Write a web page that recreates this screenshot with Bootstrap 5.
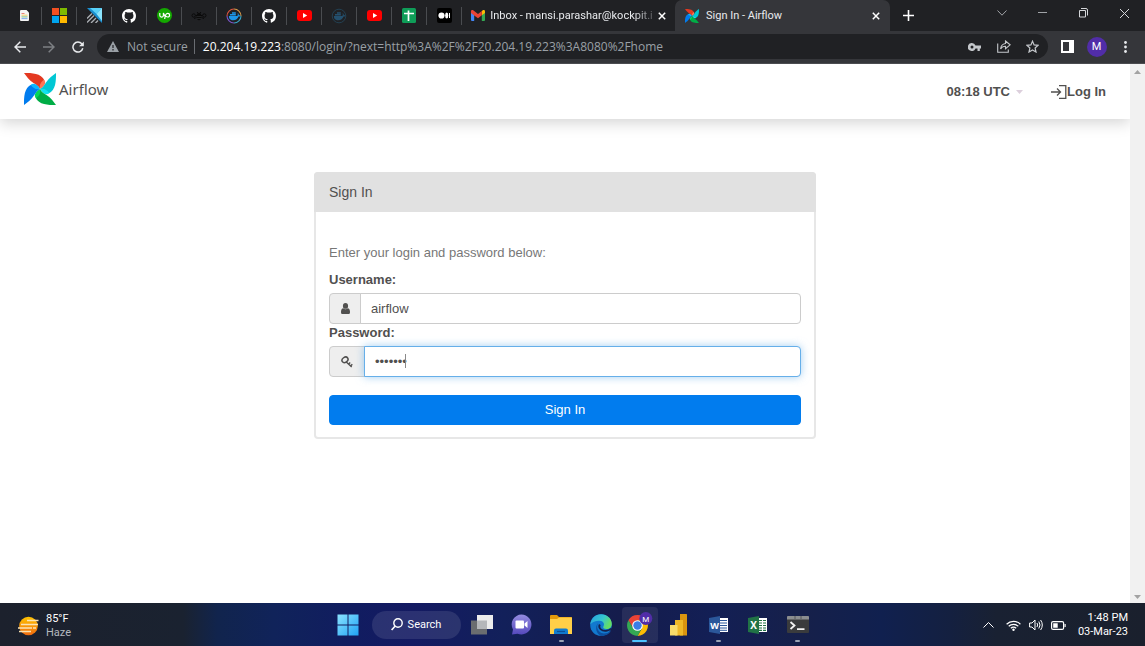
<!DOCTYPE html>
<html lang="en">
<head>
<meta charset="utf-8">
<meta name="viewport" content="width=device-width, initial-scale=1">
<title>Sign In - Airflow</title>
<link href="https://cdn.jsdelivr.net/npm/bootstrap@5.3.0/dist/css/bootstrap.min.css" rel="stylesheet">
<style>
  body { font-family: "Liberation Sans", Arial, sans-serif; font-size: 13px; line-height: 20px; color: #51504f; background: #fff; }
  svg { display: block; flex: none; }
  button { font-family: inherit; }
  .plain { background: none; border: 0; padding: 0; color: inherit; display: flex; align-items: center; justify-content: center; flex: none; }

  /* browser chrome */
  .ui-font { font-family: "Open Sans", "Noto Sans", sans-serif; }
  .tabstrip { height: 31px; background: #202124; color: #e8eaed; padding-left: 7px; font-family: Roboto, sans-serif; font-size: 11px; }
  .pinned { width: 35px; height: 18px; border-right: 1px solid #4a4c50; }
  .wide-tab { width: 213px; padding: 0 10px; gap: 5px; }
  .wide-tab .title-text { flex: 1; white-space: nowrap; text-align: left; }
  .fade-end { -webkit-mask-image: linear-gradient(90deg, #000 88%, rgba(0,0,0,.25)); mask-image: linear-gradient(90deg, #000 88%, rgba(0,0,0,.25)); }
  .current-tab { background: #35363a; border-radius: 7px 7px 0 0; width: 215px; gap: 7px; }
  .new-tab { width: 37px; }
  .win-btn { width: 41px; height: 26px; }
  .toolbar-row { height: 33px; background: #35363a; color: #e8eaed; padding: 0 5px 1px 5px; border-bottom: 1px solid #4b4c50; }
  .tool { width: 29px; height: 25px; }
  .omnibox { height: 25px; background: #202124; border-radius: 13px; margin: 0 5px; padding: 0 1px 0 10px; font-size: 12px; color: #9aa0a6; }
  .omnibox .sep { width: 1px; height: 15px; background: #6a6d72; margin: 0 8px 0 6px; }
  .omnibox .host { color: #fff; }
  .avatar { width: 20px; height: 20px; border-radius: 50%; background: #512da8; color: #fff; font-size: 11px; line-height: 20px; text-align: center; font-family: Roboto, sans-serif; }

  /* page */
  .site-nav { height: 55px; background: #fff; box-shadow: 0 4px 14px rgba(0,0,0,.17); padding: 0 24px; }
  .brand-link { gap: 3px; margin-bottom: 6px; }
  .brand-text { font-family: "Noto Sans", sans-serif; font-size: 15px; color: #51504f; }
  .site-nav a { color: #51504f; text-decoration: none; }
  .site-nav .item { font-weight: 700; font-size: 13px; gap: 6px; }
  .site-nav .login-link { gap: 0; }
  .login-card { width: 502px; max-width: 100%; margin: 53px auto 0; border: 2px solid #e7e7e7; border-radius: 4px; }
  .login-head { background: #e1e1e1; margin: -2px -2px 0; height: 40px; line-height: 40px; padding-left: 15px; font-size: 14px; border-radius: 4px 4px 0 0; }
  .login-body { padding: 31px 13px 12px; }
  .hint { color: #777; margin-bottom: 8px; }
  .login-body label { display: block; font-weight: 700; line-height: 18px; margin-bottom: 4px; }
  .login-body .input-group-text { width: 32px; height: 31px; padding: 0; justify-content: center; background: #eee; border-color: #ccc; color: #51504f; border-radius: 4px; }
  .login-body .input-group-text.key { width: 36px; }
  .login-body .form-control { height: 31px; padding: 0 10px; font-size: 13px; color: #51504f; border-color: #ccc; border-radius: 4px; }
  .login-body .form-control.active-field { border-color: #66afe9; box-shadow: 0 0 8px rgba(102,175,233,.6); }
  .caret-bar { left: 77px; top: 8px; width: 1px; height: 14px; background: #8a8a8a; z-index: 6; }
  .btn-signin { height: 30px; margin-top: 18px; padding: 0; font-size: 13px; color: #fff; background: #017cee; border: 1px solid #017cee; border-radius: 4px; }
  .btn-signin:hover { background: #0170d6; color: #fff; }
  .scroll-track { width: 15px; background: #f1f1f1; padding: 6px 0 4px; }

  /* taskbar */
  .taskbar { height: 43px; padding-left: 5px; color: #fff; font-family: Roboto, sans-serif; font-size: 11px; line-height: 14px;
    background: linear-gradient(90deg, #1c212d 0%, #1a2230 16%, #11244d 19%, #10235a 24%, #111c60 31%, #141a62 36%, #12205a 44%, #151c4c 54%, #131f55 62%, #16204a 70%, #10204f 77%, #142040 83%, #192132 87%, #1a202d 100%); }
  .side { flex: 1 1 0; min-width: 0; }
  .weather { padding: 2px 0 0 13px; gap: 6px; }
  .weather .dim { color: #b4b8bf; }
  .tray { padding: 1px 17px 0 0; gap: 8px; }
  .launchers { display: grid; grid-template-columns: repeat(9, 1fr); width: 355px; height: 43px; }
  .launch { position: relative; height: 43px; }
  .launch.running::after { content: ""; position: absolute; bottom: 4px; width: 5px; height: 2px; border-radius: 1px; background: #9ba3b5; }
  .launch.front::before { content: ""; position: absolute; inset: 4px 2px 3px; border-radius: 4px; background: rgba(255,255,255,.08); }
  .launch.front::after { width: 15px; background: #4cc2ff; }
  .launch svg { position: relative; }
  .search-pill { width: 89px; height: 28px; border-radius: 14px; background: rgba(255,255,255,.1); margin: 0 2px 0 5px; gap: 5px; font-size: 11px; }
</style>
</head>
<body class="d-flex flex-column vh-100 overflow-hidden">

<svg width="0" height="0" class="position-absolute" aria-hidden="true">
  <defs>
    <path id="blade" d="M0 0C8 0 17 0 20.500 7.500C18 9 16 12 16 16C14.500 13 12.500 12 9.500 10C5 7 2.500 3.500 0 0Z"/>
    <path id="fold" d="M16 16C15 12 17 9 20 6.800C22.300 9 21.500 13 16 16Z"/>
    <symbol id="pinwheel" viewBox="0 0 32 32">
      <g><use href="#blade" fill="#e43921"/><use href="#fold" fill="#ff7557"/></g>
      <g transform="rotate(90 16 16)"><use href="#blade" fill="#00c7d4"/><use href="#fold" fill="#11e1ee"/></g>
      <g transform="rotate(180 16 16)"><use href="#blade" fill="#00ad46"/><use href="#fold" fill="#04d659"/></g>
      <g transform="rotate(270 16 16)"><use href="#blade" fill="#017cee"/><use href="#fold" fill="#0cb6ff"/></g>
    </symbol>
    <symbol id="github" viewBox="0 0 16 16"><path fill="#fff" d="M8 0C3.580 0 0 3.580 0 8c0 3.540 2.290 6.530 5.470 7.590.4.070.55-.17.55-.38 0-.19-.01-.82-.01-1.490-2.010.37-2.530-.49-2.690-.94-.09-.23-.48-.94-.82-1.130-.28-.15-.68-.52-.01-.53.63-.01 1.080.58 1.230.82.72 1.210 1.870.87 2.330.66.070-.52.28-.87.51-1.070-1.780-.2-3.640-.89-3.640-3.950 0-.87.31-1.590.82-2.150-.08-.2-.36-1.020.08-2.120 0 0 .67-.21 2.200.82a7.600 7.600 0 0 1 4 0c1.530-1.040 2.200-.82 2.200-.82.44 1.100.16 1.920.08 2.120.51.56.82 1.270.82 2.150 0 3.070-1.870 3.750-3.650 3.950.29.25.54.73.54 1.480 0 1.070-.01 1.930-.01 2.200 0 .21.15.46.55.38A8 8 0 0 0 16 8c0-4.420-3.580-8-8-8z"/></symbol>
    <symbol id="youtube" viewBox="0 0 15 11"><rect width="15" height="11" rx="3" fill="#f00"/><path d="M6 3l4.200 2.500L6 8z" fill="#fff"/></symbol>
    <symbol id="whale" viewBox="0 0 16 16"><path d="M3 8h8c1 0 1-2 .6-3 1 .5 1.200 1.500 1.200 2.200.7-.1 1.300 0 1.700.3-.4.900-1.200 1.100-2 1.100C11.700 11 10 12.200 7.200 12.200 4.500 12.200 2.600 10.800 3 8zM4 6h5.800v1.500H4zM6 4.300h3.800v1.400H6z"/></symbol>
    <symbol id="cross" viewBox="0 0 8 8"><path d="M.8.800l6.400 6.400M7.200.800L.8 7.200" stroke="#fff" stroke-width="1.500"/></symbol>
  </defs>
</svg>

<header class="ui-font flex-shrink-0">
  <div class="tabstrip d-flex align-items-center">
    <button class="plain pinned" aria-label="Document"><svg width="9" height="11" viewBox="0 0 9 11"><path d="M1 0h5.500L9 2.500V10q0 1-1 1H1q-1 0-1-1V1q0-1 1-1z" fill="#f4f4f4"/><path d="M1.500 3.500h3" stroke="#ea8379"/><path d="M1.500 5.200h6" stroke="#f5cf66"/><path d="M1.500 6.900h6" stroke="#79c08c"/><path d="M1.500 8.600h6" stroke="#83adf0"/></svg></button>
    <button class="plain pinned" aria-label="Microsoft"><svg width="15" height="15" viewBox="0 0 15 15"><path d="M0 0h7v7H0z" fill="#f25022"/><path d="M8 0h7v7H8z" fill="#7fba00"/><path d="M0 8h7v7H0z" fill="#00a4ef"/><path d="M8 8h7v7H8z" fill="#ffb900"/></svg></button>
    <button class="plain pinned" aria-label="Project board"><svg width="15" height="15" viewBox="0 0 15 15"><path d="M0 0h15v15z" fill="#1b8fd0"/><path d="M3 0h12L9.500 6z" fill="#58d0f7"/><path d="M15 0v13L9.500 6z" fill="#8be4fb"/><path d="M0 10.500l5-5M0 14.500l7-7M4 15l5-5M8.500 15l2.500-2.500" stroke="#a9adb2" stroke-width="1.400"/></svg></button>
    <button class="plain pinned" aria-label="GitHub"><svg width="14" height="14"><use href="#github"/></svg></button>
    <button class="plain pinned" aria-label="Upwork"><svg width="15" height="15" viewBox="0 0 15 15"><circle cx="7.500" cy="7.500" r="7.500" fill="#14a800"/><path d="M2.800 5v2.300a1.800 1.800 0 0 0 3.600 0V5c.7 2 1.700 3.300 2.200 4M7.700 11c.4-3.500 1-5.700 2.900-5.700 2.600 0 2.600 3.700 0 3.700-1.300 0-2.100-1-2.700-2" fill="none" stroke="#fff" stroke-width="1.200"/></svg></button>
    <button class="plain pinned" aria-label="Hive"><svg width="16" height="10" viewBox="0 0 16 10"><g fill="none" stroke="#0a0a0b"><circle cx="2.700" cy="4.500" r="1.700"/><circle cx="13.300" cy="4.500" r="1.700"/><path d="M4.500 4.500h7M6 1l1.300 1.500M10 1L8.700 2.500M3 7.500l2.500-1M13 7.500l-2.500-1"/></g><ellipse cx="8" cy="5.500" rx="2.300" ry="3.700" fill="#0b0b0b"/><path d="M6 5.500h4M6 7.500h4" stroke="#2b2c2f" stroke-width=".7"/></svg></button>
    <button class="plain pinned" aria-label="Docker"><svg width="16" height="16" viewBox="0 0 16 16"><g fill="none" stroke-width="1.100"><path d="M1 8a7 7 0 0 1 7-7" stroke="#e0563f"/><path d="M8 1a7 7 0 0 1 7 7" stroke="#d99a4a"/><path d="M15 8a7 7 0 0 1-7 7" stroke="#39a7c9"/><path d="M8 15a7 7 0 0 1-7-7" stroke="#7a55c7"/></g><use href="#whale" fill="#1d96e8"/></svg></button>
    <button class="plain pinned" aria-label="GitHub repository"><svg width="14" height="14"><use href="#github"/></svg></button>
    <button class="plain pinned" aria-label="YouTube"><svg width="15" height="11"><use href="#youtube"/></svg></button>
    <button class="plain pinned" aria-label="Docker docs"><svg width="16" height="16" viewBox="0 0 16 16"><circle cx="8" cy="8" r="6.800" fill="none" stroke="#234052"/><use href="#whale" fill="#24506e"/></svg></button>
    <button class="plain pinned" aria-label="YouTube video"><svg width="15" height="11"><use href="#youtube"/></svg></button>
    <button class="plain pinned" aria-label="Spreadsheet"><svg width="14" height="15" viewBox="0 0 14 15"><rect width="14" height="15" rx="1.500" fill="#0f9d58"/><path d="M6.500 2.500v10.500M2 5.500h10" stroke="#fff" stroke-width="1.700"/></svg></button>
    <button class="plain pinned" aria-label="Medium"><svg width="15" height="15" viewBox="0 0 15 15"><rect width="15" height="15" rx="2" fill="#000"/><circle cx="4.500" cy="7.500" r="3.100" fill="#fff"/><ellipse cx="9.700" cy="7.500" rx="1.600" ry="2.900" fill="#fff"/><path d="M12.500 5v5" stroke="#fff" stroke-width="1"/></svg></button>
    <button class="plain wide-tab">
      <svg width="14" height="11" viewBox="0 0 14 11"><path d="M0 2v8q0 1 1 1h2.200V4.500z" fill="#4285f4"/><path d="M14 2v8q0 1-1 1h-2.200V4.500z" fill="#34a853"/><path d="M10.800 1v4.300L14 3V1.500C14 0 12.500-.3 11.500.5z" fill="#fbbc04"/><path d="M0 1.500v1.600l3.200 2.300L7 8.200l3.800-2.900V1L7 3.900 2.500.5C1.500-.3 0 0 0 1.500z" fill="#ea4335"/></svg>
      <span class="title-text fade-end">Inbox - mansi.parashar@kockpit.i</span>
      <svg width="8" height="8"><use href="#cross"/></svg>
    </button>
    <button class="plain wide-tab current-tab align-self-stretch">
      <svg width="14" height="14"><use href="#pinwheel"/></svg>
      <span class="title-text">Sign In - Airflow</span>
      <svg width="8" height="8"><use href="#cross"/></svg>
    </button>
    <button class="plain new-tab" aria-label="New tab"><svg width="11" height="11" viewBox="0 0 11 11"><path d="M5.500 0v11M0 5.500h11" stroke="#fff" stroke-width="1.600"/></svg></button>
    <div class="d-flex ms-auto align-self-start">
      <button class="plain win-btn" aria-label="Search tabs"><svg width="10" height="6" viewBox="0 0 10 6"><path d="M.5.500L5 5.200 9.500.500" fill="none" stroke="#a0a3a7"/></svg></button>
      <button class="plain win-btn" aria-label="Minimize"><svg width="9" height="2"><path d="M0 .5h9" stroke="#a0a3a7"/></svg></button>
      <button class="plain win-btn" aria-label="Restore"><svg width="9" height="10" viewBox="0 0 9 10"><path d="M.5 2.500h6v6.500h-6zM2 .5h5q1.500 0 1.500 1.500v5.500" fill="none" stroke="#d5d7da"/></svg></button>
      <button class="plain win-btn" aria-label="Close"><svg width="9" height="9" viewBox="0 0 9 9"><path d="M0 0l9 9M9 0L0 9" stroke="#d5d7da"/></svg></button>
    </div>
  </div>
  <div class="toolbar-row d-flex align-items-center">
    <button class="plain tool" aria-label="Back"><svg width="12" height="12" viewBox="0 0 12 12"><path d="M12 6H1.200M6.300.8L1 6l5.300 5.200" fill="none" stroke="#e8eaed" stroke-width="1.500"/></svg></button>
    <button class="plain tool" aria-label="Forward"><svg width="12" height="12" viewBox="0 0 12 12"><path d="M0 6h10.800M5.700.8L11 6l-5.300 5.200" fill="none" stroke="#7d8084" stroke-width="1.500"/></svg></button>
    <button class="plain tool" aria-label="Reload"><svg width="12" height="12" viewBox="0 0 12 12"><path d="M10.800 7.300A5 5 0 1 1 9.800 2.800L11 4" fill="none" stroke="#e8eaed" stroke-width="1.500"/><path d="M11.800.4v4.800H7z" fill="#e8eaed"/></svg></button>
    <div class="omnibox flex-grow-1 d-flex align-items-center">
      <svg width="12" height="11" viewBox="0 0 12 11"><path d="M6 0l6 11H0z" fill="#9aa0a6"/><path d="M6 4v3M6 8v1.500" stroke="#202124" stroke-width="1.200"/></svg>
      <span class="ms-2 text-nowrap">Not secure</span>
      <span class="sep"></span>
      <span class="flex-grow-1 text-nowrap"><span class="host">20.204.19.223</span>:8080/login/?next=http%3A%2F%2F20.204.19.223%3A8080%2Fhome</span>
      <button class="plain tool" aria-label="Saved passwords"><svg width="13" height="8" viewBox="0 0 13 8"><path fill-rule="evenodd" fill="#c4c7cb" d="M4 0a4 4 0 1 0 3.500 5.500H9.500V8h2.300V5.500H13v-3H7.500A4 4 0 0 0 4 0zm0 2.500a1.500 1.500 0 1 1 0 3 1.500 1.500 0 0 1 0-3z"/></svg></button>
      <button class="plain tool" aria-label="Share"><svg width="14" height="13" viewBox="0 0 14 13"><path d="M.7 3.500v8.800h10.600V9.500M8.500 1l4.600 3.800-4.600 3.900V6.300C6 6.300 4.600 7.200 3.600 9c.2-3 1.800-5 4.900-5.500z" fill="none" stroke="#c4c7cb" stroke-width="1.100"/></svg></button>
      <button class="plain tool" aria-label="Bookmark"><svg width="13" height="13" viewBox="0 0 13 13"><path d="M6.500 1.200l1.600 3.700 4 .4-3 2.700.9 4-3.500-2.100L3 12l.9-4-3-2.700 4-.4z" fill="none" stroke="#c4c7cb" stroke-width="1.200"/></svg></button>
    </div>
    <button class="plain tool" aria-label="Side panel"><svg width="13" height="13" viewBox="0 0 13 13"><path fill-rule="evenodd" fill="#fff" d="M0 0h13v13H0zM2 2v9h6V2z"/></svg></button>
    <button class="plain tool" aria-label="Profile"><span class="avatar">M</span></button>
    <button class="plain tool" aria-label="Menu"><svg width="3" height="12" viewBox="0 0 3 12"><g fill="#e8eaed"><circle cx="1.500" cy="1.500" r="1.400"/><circle cx="1.500" cy="6" r="1.400"/><circle cx="1.500" cy="10.500" r="1.400"/></g></svg></button>
  </div>
</header>

<div class="d-flex flex-grow-1 overflow-hidden">
  <div class="flex-grow-1 overflow-hidden">
    <nav class="site-nav d-flex align-items-center">
      <a href="#" class="brand-link d-flex align-items-center me-auto">
        <svg width="32" height="32"><use href="#pinwheel"/></svg>
        <span class="brand-text">Airflow</span>
      </a>
      <a href="#" class="item d-flex align-items-center me-4">
        <span>08:18 UTC</span>
        <svg width="7" height="4" viewBox="0 0 7 4"><path d="M0 0h7L3.500 4z" fill="#dccfdc"/></svg>
      </a>
      <a href="#" class="item login-link d-flex align-items-center ms-1">
        <svg width="16" height="14" viewBox="0 0 16 14"><path d="M0 7h9.500M6 3.500L9.500 7 6 10.500M8 .7h6.800v12.600H8" fill="none" stroke="#51504f" stroke-width="1.300"/></svg>
        <span>Log In</span>
      </a>
    </nav>
    <main>
      <section class="login-card">
        <div class="login-head">Sign In</div>
        <form class="login-body" onsubmit="return false">
          <div class="hint">Enter your login and password below:</div>
          <label for="username">Username:</label>
          <div class="input-group">
            <span class="input-group-text"><svg width="9" height="11" viewBox="0 0 9 11"><path d="M4.500 0a2.600 2.900 0 0 1 0 5.800 2.600 2.900 0 0 1 0-5.800zM2 5.200c1.500 1.500 3.500 1.500 5 0C8.600 5.600 9 7.300 9 9.200 9 10.500 8.300 11 7.500 11h-6C.7 11 0 10.500 0 9.200 0 7.300.4 5.600 2 5.200z" fill="#51504f"/></svg></span>
            <input type="text" class="form-control" id="username" value="airflow">
          </div>
          <label for="password">Password:</label>
          <div class="input-group position-relative">
            <span class="input-group-text key"><svg width="12" height="12" viewBox="0 0 12 12"><g fill="none" stroke="#51504f"><ellipse cx="4" cy="3.800" rx="3.200" ry="2.500" transform="rotate(-35 4 3.800)" stroke-width="1.500"/><path d="M5 5.800l5.700 5.200M7.500 8.200l1.700-1.700M9.600 10l1.700-1.700" stroke-width="1.400"/></g></svg></span>
            <span class="caret-bar position-absolute"></span>
            <input type="password" class="form-control active-field" id="password" value="airflow">
          </div>
          <button type="submit" class="btn btn-signin w-100">Sign In</button>
        </form>
      </section>
    </main>
  </div>
  <div class="scroll-track d-flex flex-column justify-content-between align-items-center flex-shrink-0">
    <svg width="7" height="4" viewBox="0 0 7 4"><path d="M0 4h7L3.500 0z" fill="#a3a3a3"/></svg>
    <svg width="7" height="4" viewBox="0 0 7 4"><path d="M0 0h7L3.500 4z" fill="#a3a3a3"/></svg>
  </div>
</div>

<footer class="taskbar d-flex align-items-center flex-shrink-0">
  <div class="side weather d-flex align-items-center">
    <svg width="22" height="20" viewBox="0 0 22 20"><defs><linearGradient id="sun" x2="0" y2="1"><stop stop-color="#ffc400"/><stop offset="1" stop-color="#f06a10"/></linearGradient></defs><circle cx="10.500" cy="10" r="9.300" fill="url(#sun)"/><path d="M9 4.500h11.500M3 8.500h17M0 12h14M15 12h3M1 15.500h12" stroke="#fbe3b4" stroke-width="1.600"/></svg>
    <div><div>85°F</div><div class="dim">Haze</div></div>
  </div>
  <button class="plain launch px-2" aria-label="Start"><svg width="22" height="22" viewBox="0 0 22 22"><defs><linearGradient id="win" x2="1" y2="1"><stop stop-color="#8be3ff"/><stop offset="1" stop-color="#1fa4f4"/></linearGradient></defs><path d="M.5.500h10v10h-10zM11.500.500h10v10h-10zM.5 11.500h10v10h-10zM11.500 11.500h10v10h-10z" fill="url(#win)"/></svg></button>
  <button class="plain search-pill"><svg width="12" height="13" viewBox="0 0 12 13"><circle cx="7" cy="5" r="4.200" fill="none" stroke="#fff" stroke-width="1.400"/><path d="M4 8.200L.6 12" stroke="#fff" stroke-width="1.600"/></svg>Search</button>
  <div class="launchers">
    <button class="plain launch" aria-label="Task view"><svg width="22" height="20" viewBox="0 0 22 20"><path d="M0 5.500h16v14H0z" fill="#6b6d70"/><path d="M6 0h16v14H6z" fill="#ececec"/><path d="M6 5.500h10V14H6z" fill="#b5b7ba"/></svg></button>
    <button class="plain launch" aria-label="Chat"><svg width="21" height="21" viewBox="0 0 21 21"><defs><linearGradient id="chat" x2="0" y2="1"><stop stop-color="#948be0"/><stop offset="1" stop-color="#5549bd"/></linearGradient></defs><path d="M10.500.500a10 10 0 1 1-4 19.200L1 20.500l1-5A10 10 0 0 1 10.500.500z" fill="url(#chat)"/><rect x="4.500" y="6.500" width="8.500" height="8" rx="1" fill="#fff"/><path d="M13.500 9.500l3-2.500v7l-3-2.500z" fill="#fff"/></svg></button>
    <button class="plain launch running" aria-label="File Explorer"><svg width="22" height="20" viewBox="0 0 22 20"><path d="M0 1q0-1 1-1h6l2 2h12q1 0 1 1v5H0z" fill="#e39a0b"/><path d="M0 4h7l2-1.500h13V19H0z" fill="#ffcf48"/><path d="M4 19v-3.500q0-2 2-2h10q2 0 2 2V19z" fill="#0f7bd0"/><path d="M7 16.500h8" stroke="#0a4f96" stroke-width="1.200"/></svg></button>
    <button class="plain launch" aria-label="Edge"><svg width="22" height="22" viewBox="0 0 22 22"><defs><linearGradient id="edgeTop" x2="1" y2=".4"><stop stop-color="#279fdd"/><stop offset=".6" stop-color="#35c6d0"/><stop offset="1" stop-color="#65dd65"/></linearGradient></defs><circle cx="11" cy="11" r="10.800" fill="#1279cf"/><path d="M.3 10.500C1 4 5.500.2 11 .2c6.300 0 10.800 4.500 10.800 9.800 0 3-2.300 5-5.300 5-2.700 0-4-1.200-3-2.700 1.500-2.300-.3-5.500-3.700-5.500-4 0-8 1.500-9.500 3.700z" fill="url(#edgeTop)"/><path d="M8.500 8.500c-2.700 3-1.500 10.500 5.500 11 2.700 0 4.500-.7 6-2l1-.2c-2 3-5.500 4.600-9.500 4.600-5-1.200-7.500-9-3-13.400z" fill="#0c4fa0"/><path d="M9.800 10.500c-2 3.500 2.200 7.300 7.200 6.200 2-.4 3.300-1.200 4.200-2.200" stroke="#12224f" stroke-width="1.800" fill="none"/></svg></button>
    <button class="plain launch running front" aria-label="Chrome"><svg width="27" height="25" viewBox="0 0 27 25"><path d="M2.400 8.300A10.500 10.500 0 0 1 20.600 8.300h-9.100L7 16z" fill="#ea4335"/><path d="M11.500 24A10.500 10.500 0 0 0 20.600 8.300h-9.100l4.500 8z" fill="#fbbc04"/><path d="M2.400 8.300A10.500 10.500 0 0 0 11.500 24l4.500-8-9 0z" fill="#34a853"/><circle cx="11.500" cy="13.500" r="5.300" fill="#fff"/><circle cx="11.500" cy="13.500" r="4.200" fill="#3c7de6"/><circle cx="19.800" cy="6.500" r="6.500" fill="#512da8"/><text x="19.800" y="9.500" text-anchor="middle" font-family="Roboto, sans-serif" font-size="8" fill="#fff">M</text></svg></button>
    <button class="plain launch" aria-label="Power BI"><svg width="18" height="22" viewBox="0 0 18 22"><path d="M10 0h6.500q.5 0 .5.500v21h-7z" fill="#d9950f"/><path d="M5 6h8v15.500H5z" fill="#efb927"/><path d="M0 11h7.500v10.500H0z" fill="#f8dc6a"/></svg></button>
    <button class="plain launch running" aria-label="Word"><svg width="20" height="18" viewBox="0 0 20 18"><path d="M10 2h9v14h-9z" fill="#fff"/><path d="M11 4.500h7M11 7h7M11 9.500h7M11 12h7M11 14.300h7" stroke="#2b579a"/><path d="M0 2l11-2v18L0 16z" fill="#2b579a"/><text x="5.500" y="12.500" text-anchor="middle" font-family="Open Sans, sans-serif" font-weight="700" font-size="9" fill="#fff">W</text></svg></button>
    <button class="plain launch" aria-label="Excel"><svg width="20" height="18" viewBox="0 0 20 18"><path d="M10 2h9v14h-9z" fill="#fff"/><path d="M11 4.500h7M11 7h7M11 9.500h7M11 12h7M11 14.300h7" stroke="#217346" stroke-width="1.200"/><path d="M14.500 3v12" stroke="#fff"/><path d="M0 2l11-2v18L0 16z" fill="#217346"/><text x="5.500" y="12.500" text-anchor="middle" font-family="Open Sans, sans-serif" font-weight="700" font-size="10" fill="#fff">X</text></svg></button>
    <button class="plain launch running" aria-label="Terminal"><svg width="22" height="17" viewBox="0 0 22 17"><rect width="22" height="17" rx="1" fill="#3a3b3d"/><path d="M0 1q0-1 1-1h20q1 0 1 1v2.500H0z" fill="#8b8d90"/><path d="M8 0v3M14 0v3" stroke="#55575a"/><path d="M3.500 6l4 3.500-4 3.500M10 13.200h7.500" fill="none" stroke="#f2f2f2" stroke-width="1.800"/></svg></button>
  </div>
  <div class="side tray d-flex align-items-center justify-content-end">
    <svg class="me-1" width="11" height="6" viewBox="0 0 11 6"><path d="M.5 5.500l5-5 5 5" fill="none" stroke="#fff"/></svg>
    <svg width="15" height="11" viewBox="0 0 15 11"><g fill="none" stroke="#fff" stroke-width="1.200"><path d="M.6 4.200a10 10 0 0 1 13.800 0M2.700 6.300a7 7 0 0 1 9.600 0M4.800 8.300a4 4 0 0 1 5.400 0"/></g><circle cx="7.500" cy="9.700" r="1.200" fill="#fff"/></svg>
    <svg width="14" height="12" viewBox="0 0 14 12"><path d="M.6 4v4H3l3 3V1L3 4zM8 4q1.200 2 0 4M9.800 2.500q2.400 3.500 0 7M11.600 1q3.400 5 0 10" fill="none" stroke="#fff"/></svg>
    <svg width="15" height="9" viewBox="0 0 15 9"><rect x=".6" y=".6" width="12" height="7.800" rx="1.500" fill="none" stroke="#fff" stroke-width="1.200"/><path d="M2.200 2.200h4.500v4.600H2.200zM13.500 3h1.200v3h-1.200z" fill="#fff"/></svg>
    <div class="text-end ms-1"><div>1:48 PM</div><div>03-Mar-23</div></div>
  </div>
</footer>

<script src="https://cdn.jsdelivr.net/npm/bootstrap@5.3.0/dist/js/bootstrap.bundle.min.js"></script>
</body>
</html>
